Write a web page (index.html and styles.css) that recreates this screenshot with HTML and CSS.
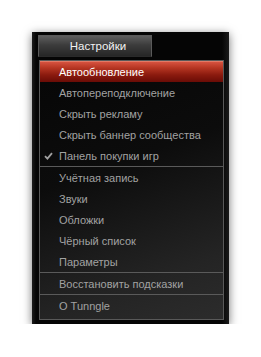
FILE: index.html
```html
<!DOCTYPE html>
<html>
<head>
<meta charset="utf-8">
<link rel="stylesheet" href="styles.css">
</head>
<body>
<div class="panel">
  <div class="tab">Настройки</div>
  <div class="menu">
    <div class="item active">Автообновление</div>
    <div class="item">Автопереподключение</div>
    <div class="item">Скрыть рекламу</div>
    <div class="item">Скрыть баннер сообщества</div>
    <div class="item checked"><svg class="check" width="9" height="8" viewBox="0 0 9 8"><path d="M1 4.2 L3.4 6.6 L8 1.2" fill="none" stroke="#a0a0a0" stroke-width="1.8"/></svg>Панель покупки игр</div>
    <div class="sep"></div>
    <div class="item">Учётная запись</div>
    <div class="item">Звуки</div>
    <div class="item">Обложки</div>
    <div class="item">Чёрный список</div>
    <div class="item">Параметры</div>
    <div class="sep"></div>
    <div class="item">Восстановить подсказки</div>
    <div class="sep"></div>
    <div class="item">О Tunngle</div>
  </div>
</div>
</body>
</html>
```
FILE: styles.css
```css
html, body {
  margin: 0;
  padding: 0;
  background: #ffffff;
}
body {
  padding: 32px 0 0 32px;
  font-family: "Liberation Sans", Arial, sans-serif;
}
.panel {
  width: 197px;
  height: 292px;
  background: linear-gradient(90deg, #1c1c1c 0px, #050505 4px, #050505 190px, #1a1a1a 197px);
  box-shadow: 0 2px 9px rgba(0, 0, 0, 0.55);
  padding: 3px 0 0 6px;
  box-sizing: border-box;
  display: flex;
  flex-direction: column;
}
.tab {
  width: 114px;
  height: 22px;
  box-sizing: border-box;
  border: 1px solid #5a5a5a;
  border-bottom-color: #2a2a2a;
  background: linear-gradient(180deg, #5e5e5e 0%, #3c3c3c 45%, #262626 100%);
  color: #f2f2f2;
  font-size: 11.5px;
  display: flex;
  align-items: center;
  justify-content: center;
  padding-left: 6px;
}
.menu {
  margin: 3px 0 0 1px;
  width: 185px;
  height: 260px;
  box-sizing: border-box;
  border: 1px solid #595959;
  background: linear-gradient(160deg, #060606 0%, #0c0c0c 40%, #242424 80%, #2c2c2c 100%);
  display: flex;
  flex-direction: column;
}
.item {
  height: 21px;
  flex: none;
  display: flex;
  align-items: center;
  padding-left: 19px;
  color: #a2a2a2;
  font-size: 11px;
  position: relative;
}
.item.active {
  color: #ffffff;
  background: linear-gradient(180deg, #d6523f 0%, #b53522 30%, #8a1a0e 65%, #6a0c06 100%);
  border-top: 1px solid #e27a66;
  box-sizing: border-box;
}
.check {
  position: absolute;
  left: 4px;
  top: 7px;
}
.sep {
  height: 1px;
  flex: none;
  background: #5a5a5a;
}
```
